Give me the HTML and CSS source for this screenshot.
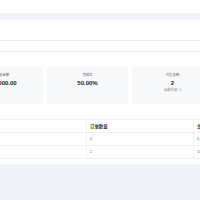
FILE: index.html
```html
<!DOCTYPE html>
<html lang="zh-CN">
<head>
    <meta charset="UTF-8">
    <meta name="viewport" content="width=device-width, initial-scale=1.0">
    <title>代售统计</title>
    <link rel="stylesheet" href="styles.css">
</head>
<body>
    <div class="header"></div>

    <div class="main">
        <div class="panel">
            <div class="search-bar"></div>
            <div class="tabs"></div>

            <div class="stat-cards">
                <div class="stat-card">
                    <div class="stat-label">代收金额</div>
                    <div class="stat-value">¥10000.00</div>
                </div>
                <div class="stat-card">
                    <div class="stat-label">完成率</div>
                    <div class="stat-value">50.00%</div>
                </div>
                <div class="stat-card">
                    <div class="stat-label">代售总数</div>
                    <div class="stat-value">2</div>
                    <div class="stat-sub">当前代收: 1</div>
                </div>
            </div>

            <table class="data-table">
                <thead>
                    <tr>
                        <th class="col-name">名称</th>
                        <th class="col-count">订单数量</th>
                        <th>总金额</th>
                    </tr>
                </thead>
                <tbody>
                    <tr>
                        <td>A</td>
                        <td>0</td>
                        <td>0.00</td>
                    </tr>
                    <tr>
                        <td>B</td>
                        <td>2</td>
                        <td>10000.00</td>
                    </tr>
                </tbody>
            </table>
        </div>
    </div>
</body>
</html>
```

FILE: styles.css
```css
body {
    margin: 0;
    background: #fff;
    font-family: "Liberation Sans", "Noto Sans CJK SC", sans-serif;
    overflow: hidden;
}
.header {
    height: 13px;
    background: #fff;
}
.main {
    background: #f0f3f7;
    padding-top: 7px;
    height: 200px;
}
.panel {
    background: #fff;
    width: 300px;
    margin-left: -38px;
    padding-bottom: 5px;
}
.search-bar {
    height: 20px;
    border-bottom: 1px solid #ececec;
}
.tabs {
    height: 10px;
    border-bottom: 1px solid #ececec;
}
.stat-cards {
    display: grid;
    grid-template-columns: repeat(3, 81px);
    gap: 4px;
    margin-top: 15px;
}
.stat-card {
    background: #f7f8fa;
    border-radius: 1px;
    padding: 6px 4px 11px;
    text-align: center;
}
.stat-label {
    font-size: 3.4px;
    line-height: 5px;
    color: #666;
    margin-bottom: 1px;
}
.stat-value {
    font-size: 6px;
    line-height: 8px;
    font-weight: bold;
    color: #222;
}
.stat-sub {
    font-size: 3.4px;
    line-height: 5px;
    color: #777;
    margin-top: 1px;
}
.data-table {
    width: 300px;
    margin-top: 15px;
    border-collapse: collapse;
    table-layout: fixed;
    font-size: 3.8px;
}
.data-table th,
.data-table td {
    height: 12px;
    padding: 0 3px;
    text-align: left;
    border-top: 1px solid #f0f0f0;
    border-bottom: 1px solid #f0f0f0;
    border-left: 1px solid #f0f0f0;
    white-space: nowrap;
    overflow: hidden;
}
.data-table th:first-child,
.data-table td:first-child {
    border-left: none;
}
.data-table th {
    font-weight: bold;
    color: #333;
    font-size: 4.4px;
}
.data-table td {
    color: #777;
}
.col-name {
    width: 118px;
}
.col-count {
    width: 100px;
}
```
